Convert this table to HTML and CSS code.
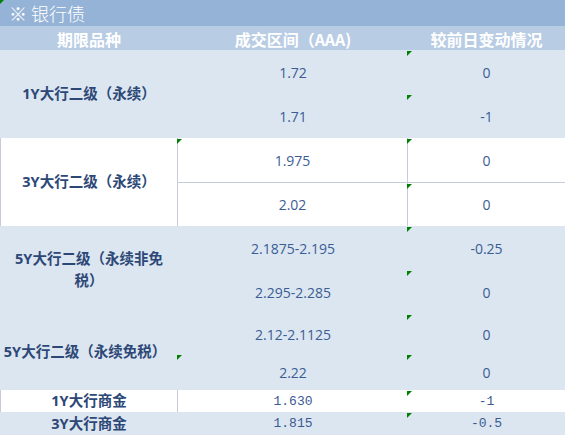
FILE: index.html
```html
<!DOCTYPE html>
<html lang="zh">
<head>
<meta charset="utf-8">
<title>银行债</title>
<link rel="stylesheet" href="styles.css">
</head>
<body>
<div class="sheet">
  <div class="title mk0">※ 银行债</div>
  <div class="hd">期限品种</div>
  <div class="hd">成交区间（AAA)</div>
  <div class="hd">较前日变动情况</div>

  <div class="lab blue span2">1Y大行二级（永续）</div>
  <div class="num blue">1.72</div>
  <div class="num blue mk">0</div>
  <div class="num blue">1.71</div>
  <div class="num blue mk">-1</div>

  <div class="lab white grid-l span2">3Y大行二级（永续）</div>
  <div class="num white grid-r mk">1.975</div>
  <div class="num white mk">0</div>
  <div class="num white grid-r grid-t">2.02</div>
  <div class="num white grid-t mk">0</div>

  <div class="lab blue span2 narrow">5Y大行二级（永续非免税）</div>
  <div class="num blue">2.1875-2.195</div>
  <div class="num blue mk">-0.25</div>
  <div class="num blue">2.295-2.285</div>
  <div class="num blue mk">0</div>

  <div class="lab blue span2 tight">5Y大行二级（永续免税）</div>
  <div class="num blue">2.12-2.1125</div>
  <div class="num blue mk">0</div>
  <div class="num blue mk">2.22</div>
  <div class="num blue mk">0</div>

  <div class="lab white grid-l">1Y大行商金</div>
  <div class="num mono white">1.630</div>
  <div class="num mono white mk">-1</div>

  <div class="lab blue">3Y大行商金</div>
  <div class="num mono blue">1.815</div>
  <div class="num mono blue mk">-0.5</div>
</div>
</body>
</html>
```

FILE: styles.css
```css
html, body {
  margin: 0;
  padding: 0;
  background: #ffffff;
}

.sheet {
  width: 565px;
  height: 435px;
  overflow: hidden;
  display: grid;
  grid-template-columns: 178px 230px 157px;
  grid-template-rows: 26px 24px 44px 44px 44px 44px 44px 44px 40px 36px 22px 23px;
  font-family: "Noto Sans CJK SC", "Open Sans", sans-serif;
}

.sheet > div {
  position: relative;
  box-sizing: border-box;
  display: flex;
  align-items: center;
  justify-content: center;
  text-align: center;
  min-width: 0;
}

.title {
  grid-column: 1 / 4;
  background: #95b3d7;
  color: #ffffff;
  font-size: 18px;
  font-weight: 300;
  justify-content: flex-start !important;
  padding-left: 9px;
}

.hd {
  background: #b8cce4;
  color: #ffffff;
  font-size: 16px;
  font-weight: 700;
  padding-top: 1px;
}

.blue { background: #dce6f1; }
.white { background: #ffffff; }

.span2 { grid-row: span 2; }

.lab {
  color: #2d4876;
  font-size: 14.5px;
  font-weight: 700;
  line-height: 22px;
  padding: 0 6px;
  font-family: "Open Sans", "Noto Sans CJK SC", sans-serif;
}

.narrow { padding: 0 11px; }
.tight { padding: 0 8px 0 0; }

.num {
  color: #3a5d93;
  font-family: "Open Sans", "Liberation Sans", sans-serif;
  font-size: 14px;
}

.mono {
  font-family: "Liberation Mono", "DejaVu Sans Mono", monospace;
  font-size: 13px;
  color: #3a5a90;
}

.grid-l {
  border-left: 1px solid #c7ccdb;
  border-right: 1px solid #c7ccdb;
}

.grid-r { border-right: 1px solid #c7ccdb; }
.grid-t { border-top: 1px solid #c7ccdb; }

.mk::before,
.mk0::before {
  content: "";
  position: absolute;
  top: 1px;
  left: -1px;
  width: 5px;
  height: 5px;
  background: #008000;
  clip-path: polygon(0 0, 100% 0, 0 100%);
}

.mk0::before {
  top: 0;
  left: 0;
  width: 4px;
  height: 4px;
}
```
